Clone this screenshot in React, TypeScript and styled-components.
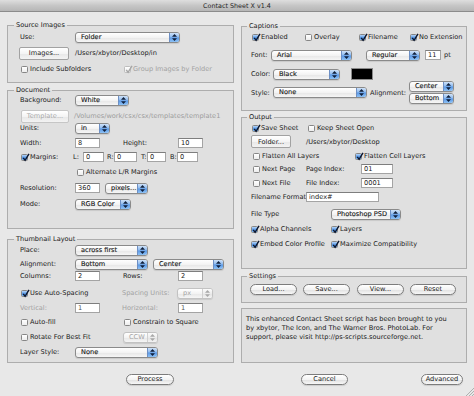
import React from 'react';
import styled, { createGlobalStyle } from 'styled-components';

const GlobalStyle = createGlobalStyle`
  html, body {
    margin: 0;
    padding: 0;
    background: #e8e8e8;
  }
  body {
    font-family: 'DejaVu Sans', 'Liberation Sans', sans-serif;
    font-size: 6.6px;
    color: #1a1a1a;
  }
  * {
    box-sizing: border-box;
  }
`;

const Window = styled.div`
  position: relative;
  width: 474px;
  height: 396px;
  display: flex;
  flex-direction: column;
  background: #e8e8e8;
  overflow: hidden;
`;

const TitleBar = styled.div`
  flex: none;
  height: 12px;
  display: flex;
  align-items: center;
  justify-content: center;
  background: linear-gradient(#dedede, #c6c6c6 50%, #b6b6b6);
  border-bottom: 1px solid #8c8c8c;
  color: #262626;
  font-size: 6.4px;
`;

const Body = styled.div`
  flex: none;
  display: grid;
  grid-template-columns: 227px 226px;
  column-gap: 7px;
  padding: 9px 0 0 7px;
`;

const Column = styled.div`
  display: flex;
  flex-direction: column;
`;

const Group = styled.fieldset<{ $mt?: number; $pb: number; $pl: number }>`
  margin: ${({ $mt }) => $mt ?? 0}px 0 0;
  padding: 0 0 ${({ $pb }) => $pb}px ${({ $pl }) => $pl}px;
  border: 1px solid #adadad;
  background: rgba(0, 0, 0, 0.03);
  min-width: 0;
`;

const Legend = styled.legend<{ $ml: number }>`
  margin-left: ${({ $ml }) => $ml}px;
  padding: 0 2px;
  line-height: 8px;
`;

const Row = styled.div<{ $mt?: number; $h?: number }>`
  display: flex;
  align-items: center;
  height: ${({ $h }) => $h ?? 12}px;
  margin-top: ${({ $mt }) => $mt ?? 0}px;
  white-space: nowrap;
`;

const Label = styled.span<{ $w?: number; $ml?: number; $off?: boolean }>`
  flex: none;
  width: ${({ $w }) => ($w ? `${$w}px` : 'auto')};
  margin-left: ${({ $ml }) => $ml ?? 0}px;
  color: ${({ $off }) => ($off ? '#a2a2a2' : '#1a1a1a')};
`;

const PathText = styled.span<{ $ml: number; $off?: boolean }>`
  margin-left: ${({ $ml }) => $ml}px;
  color: ${({ $off }) => ($off ? '#9c9c9c' : '#1a1a1a')};
`;

const PopupBox = styled.div<{ $w: number; $ml?: number; $off?: boolean }>`
  flex: none;
  width: ${({ $w }) => $w}px;
  height: 11px;
  margin-left: ${({ $ml }) => $ml ?? 0}px;
  display: flex;
  align-items: stretch;
  border: 1px solid ${({ $off }) => ($off ? '#c2c2c2' : '#8a8a8a')};
  border-radius: 3px;
  background: linear-gradient(#ffffff, #f3f3f3 50%, #e6e6e6 51%, #f6f6f6);
  box-shadow: 0 1px 1px rgba(0, 0, 0, 0.1);
  overflow: hidden;
`;

const PopupText = styled.span<{ $off?: boolean }>`
  flex: 1;
  padding-left: 5px;
  line-height: 9px;
  overflow: hidden;
  color: ${({ $off }) => ($off ? '#a4a4a4' : '#151515')};
  -webkit-text-stroke: ${({ $off }) => ($off ? '0' : '0.12px')};
`;

const PopupCap = styled.span<{ $off?: boolean }>`
  flex: none;
  width: 10px;
  display: flex;
  align-items: center;
  justify-content: center;
  border-left: 1px solid ${({ $off }) => ($off ? '#d0d0d0' : '#6d8fc4')};
  background: ${({ $off }) =>
    $off
      ? 'linear-gradient(#fbfbfb, #ececec 50%, #e2e2e2 51%, #f3f3f3)'
      : 'linear-gradient(#cfe2f9, #8ab8ee 48%, #5896e4 52%, #8fc3f6)'};
`;

const Field = styled.input<{ $w: number; $ml?: number; $dim?: boolean }>`
  flex: none;
  width: ${({ $w }) => $w}px;
  height: 10px;
  margin: 0 0 0 ${({ $ml }) => $ml ?? 0}px;
  padding: 0 2px;
  border: 1px solid #a4a4a4;
  border-top-color: #7e7e7e;
  background: #fff;
  font: inherit;
  color: ${({ $dim }) => ($dim ? '#555' : '#1a1a1a')};
  outline: none;
`;

const CheckItem = styled.span<{ $w?: number; $pl?: number; $off?: boolean }>`
  flex: none;
  display: flex;
  align-items: center;
  width: ${({ $w }) => ($w ? `${$w}px` : 'auto')};
  padding-left: ${({ $pl }) => $pl ?? 0}px;
  color: ${({ $off }) => ($off ? '#a2a2a2' : '#1a1a1a')};
`;

const Box = styled.span<{ $on?: boolean; $off?: boolean }>`
  position: relative;
  flex: none;
  width: 7px;
  height: 7px;
  margin-right: 2px;
  border: 1px solid ${({ $off }) => ($off ? '#bdbdbd' : '#868686')};
  border-radius: 1.5px;
  background: ${({ $on, $off }) =>
    $on && !$off
      ? 'linear-gradient(#b6d5f8, #5d9be6 50%, #3a80dc 51%, #86c0f6)'
      : 'linear-gradient(#ffffff, #ededed)'};
`;

const Tick = styled.svg`
  position: absolute;
  left: 0;
  top: -2px;
`;

const BevelButton = styled.button<{ $w: number; $ml?: number; $off?: boolean }>`
  flex: none;
  width: ${({ $w }) => $w}px;
  height: 13px;
  margin: 0 0 0 ${({ $ml }) => $ml ?? 0}px;
  padding: 0;
  font: inherit;
  color: ${({ $off }) => ($off ? '#a8a8a8' : '#1a1a1a')};
  border: 1px solid ${({ $off }) => ($off ? '#c6c6c6' : '#a2a2a2')};
  border-radius: 2px;
  background: linear-gradient(#ffffff, #f4f4f4 50%, #e7e7e7 51%, #f3f3f3);
`;

const PillButton = styled.button<{ $w: number; $ml?: number }>`
  flex: none;
  width: ${({ $w }) => $w}px;
  height: 11px;
  margin: 0 0 0 ${({ $ml }) => $ml ?? 0}px;
  padding: 0;
  font: inherit;
  line-height: 9px;
  color: #1a1a1a;
  border: 1px solid #7c7c7c;
  border-radius: 6px;
  background: linear-gradient(#ffffff, #f3f3f3 50%, #e0e0e0 51%, #f7f7f7);
  box-shadow: 0 1px 1px rgba(0, 0, 0, 0.12);
`;

const Swatch = styled.span<{ $ml: number }>`
  flex: none;
  width: 22px;
  height: 12px;
  margin-left: ${({ $ml }) => $ml}px;
  background: #000;
  border: 1px solid #8a8a8a;
`;

const Stack = styled.div<{ $ml: number }>`
  display: flex;
  flex-direction: column;
  gap: 1px;
  margin-left: ${({ $ml }) => $ml}px;
`;

const InfoBox = styled.div`
  flex: 1;
  margin-top: 5px;
  padding: 6px 4px 0;
  border: 1px solid #adadad;
  background: rgba(0, 0, 0, 0.03);
  line-height: 9px;
  white-space: nowrap;
`;

const Footer = styled.div`
  flex: 1;
  display: flex;
  align-items: center;
  padding-bottom: 1px;
`;

const Grip = styled.svg`
  position: absolute;
  right: 0;
  bottom: 0;
`;

type PopupProps = { text: string; w: number; ml?: number; off?: boolean };

function Popup({ text, w, ml, off }: PopupProps) {
  return (
    <PopupBox $w={w} $ml={ml} $off={off}>
      <PopupText $off={off}>{text}</PopupText>
      <PopupCap $off={off}>
        <svg width="5" height="7" viewBox="0 0 5 7">
          <path d="M2.5 0 L5 2.7 H0 Z M2.5 7 L5 4.3 H0 Z" fill={off ? '#a8a8a8' : '#10203c'} />
        </svg>
      </PopupCap>
    </PopupBox>
  );
}

type CheckProps = { label: string; on?: boolean; off?: boolean; w?: number; ml?: number };

function Check({ label, on, off, w, ml }: CheckProps) {
  return (
    <CheckItem $w={w} $pl={ml} $off={off}>
      <Box $on={on} $off={off}>
        {on && (
          <Tick width="8" height="9" viewBox="0 0 8 9">
            <path
              d="M1.2 4.9 L3.1 7.3 L7 0.8"
              fill="none"
              stroke={off ? '#a6a6a6' : '#0b1730'}
              strokeWidth="1.4"
            />
          </Tick>
        )}
      </Box>
      {label}
    </CheckItem>
  );
}

function LeftColumn() {
  return (
    <Column>
      <Group $pb={7} $pl={12}>
        <Legend $ml={-6}>Source Images</Legend>
        <Row $mt={2}>
          <Label $w={55}>Use:</Label>
          <Popup text="Folder" w={105} />
        </Row>
        <Row $mt={4}>
          <BevelButton $w={50} $ml={-1}>Images...</BevelButton>
          <PathText $ml={6}>/Users/xbytor/Desktop/in</PathText>
        </Row>
        <Row $mt={4}>
          <Check label="Include Subfolders" w={104} ml={1} />
          <Check label="Group Images by Folder" on off />
        </Row>
      </Group>

      <Group $mt={3} $pb={18} $pl={12}>
        <Legend $ml={-6}>Document</Legend>
        <Row>
          <Label $w={55}>Background:</Label>
          <Popup text="White" w={54} />
        </Row>
        <Row $mt={4}>
          <BevelButton $w={48} $ml={1} $off>Template...</BevelButton>
          <PathText $ml={5} $off>/Volumes/work/csx/csx/templates/template1</PathText>
        </Row>
        <Row>
          <Label $w={55}>Units:</Label>
          <Popup text="in" w={35} />
        </Row>
        <Row $mt={3}>
          <Label $w={55}>Width:</Label>
          <Field $w={25} defaultValue="8" readOnly />
          <Label $w={55} $ml={23}>Height:</Label>
          <Field $w={25} defaultValue="10" readOnly />
        </Row>
        <Row $mt={2}>
          <Check label="Margins:" on w={53} ml={1} />
          <Label $w={10}>L:</Label>
          <Field $w={21} defaultValue="0" readOnly />
          <Label $w={7} $ml={3}>R:</Label>
          <Field $w={23} defaultValue="0" readOnly />
          <Label $w={6} $ml={4}>T:</Label>
          <Field $w={19} defaultValue="0" readOnly />
          <Label $w={7} $ml={4}>B:</Label>
          <Field $w={21} defaultValue="0" readOnly />
        </Row>
        <Row $mt={3}>
          <Check label="Alternate L/R Margins" ml={57} />
        </Row>
        <Row $mt={4}>
          <Label $w={55}>Resolution:</Label>
          <Field $w={25} defaultValue="360" readOnly />
          <Popup text="pixels..." w={43} ml={5} />
        </Row>
        <Row $mt={4}>
          <Label $w={55}>Mode:</Label>
          <Popup text="RGB Color" w={56} />
        </Row>
      </Group>

      <Group $mt={6} $pb={4} $pl={12}>
        <Legend $ml={-6}>Thumbnail Layout</Legend>
        <Row $mt={1}>
          <Label $w={55}>Place:</Label>
          <Popup text="across first" w={73} />
        </Row>
        <Row $mt={2}>
          <Label $w={55}>Alignment:</Label>
          <Popup text="Bottom" w={73} />
          <Popup text="Center" w={71} ml={5} />
        </Row>
        <Row>
          <Label $w={55}>Columns:</Label>
          <Field $w={25} defaultValue="2" readOnly />
          <Label $w={55} $ml={23}>Rows:</Label>
          <Field $w={25} defaultValue="2" readOnly />
        </Row>
        <Row $mt={5}>
          <Check label="Use Auto-Spacing" on w={102} ml={1} />
          <Label $w={55} $off>Spacing Units:</Label>
          <Popup text="px" w={36} off />
        </Row>
        <Row $mt={3}>
          <Label $w={55} $off>Vertical:</Label>
          <Field $w={25} defaultValue="1" readOnly $dim />
          <Label $w={56} $ml={22} $off>Horizontal:</Label>
          <Field $w={25} defaultValue="1" readOnly $dim />
        </Row>
        <Row $mt={2}>
          <Check label="Auto-fill" w={104} ml={1} />
          <Check label="Constrain to Square" />
        </Row>
        <Row $mt={3}>
          <Check label="Rotate For Best Fit" w={103} ml={1} />
          <Popup text="CCW" w={35} off />
        </Row>
        <Row $mt={3}>
          <Label $w={55}>Layer Style:</Label>
          <Popup text="None" w={83} />
        </Row>
      </Group>
    </Column>
  );
}

function RightColumn() {
  return (
    <Column>
      <Group $mt={1} $pb={6} $pl={9}>
        <Legend $ml={-4}>Captions</Legend>
        <Row $mt={1}>
          <Check label="Enabled" on w={54} ml={1} />
          <Check label="Overlay" w={54} />
          <Check label="Filename" on w={51} />
          <Check label="No Extension" on />
        </Row>
        <Row $mt={6}>
          <Label $w={20}>Font:</Label>
          <Popup text="Arial" w={81} />
          <Popup text="Regular" w={54} ml={14} />
          <Field $w={16} $ml={5} defaultValue="11" readOnly />
          <Label $ml={3}>pt</Label>
        </Row>
        <Row $mt={7}>
          <Label $w={22}>Color:</Label>
          <Popup text="Black" w={67} />
          <Swatch $ml={11} />
        </Row>
        <Row $mt={1} $h={23}>
          <Label $w={22}>Style:</Label>
          <Popup text="None" w={94} />
          <Label $w={39} $ml={3}>Alignment:</Label>
          <Stack $ml={0}>
            <Popup text="Center" w={45} />
            <Popup text="Bottom" w={45} />
          </Stack>
        </Row>
      </Group>

      <Group $mt={2} $pb={18} $pl={9}>
        <Legend $ml={-4}>Output</Legend>
        <Row $mt={1}>
          <Check label="Save Sheet" on w={57} ml={1} />
          <Check label="Keep Sheet Open" />
        </Row>
        <Row $mt={1} $h={13}>
          <BevelButton $w={40}>Folder...</BevelButton>
          <PathText $ml={15}>/Users/xbytor/Desktop</PathText>
        </Row>
        <Row $mt={2}>
          <Check label="Flatten All Layers" w={104} ml={2} />
          <Check label="Flatten Cell Layers" on />
        </Row>
        <Row $mt={1}>
          <Check label="Next Page" w={55} ml={2} />
          <Label $w={55}>Page Index:</Label>
          <Field $w={32} defaultValue="01" readOnly />
        </Row>
        <Row $mt={2}>
          <Check label="Next File" w={55} ml={2} />
          <Label $w={55}>File Index:</Label>
          <Field $w={32} defaultValue="0001" readOnly />
        </Row>
        <Row $mt={2}>
          <Label $w={55}>Filename Format</Label>
          <Field $w={73} defaultValue="index#" readOnly />
        </Row>
        <Row $mt={5}>
          <Label $w={80}>File Type</Label>
          <Popup text="Photoshop PSD" w={70} />
        </Row>
        <Row $mt={3}>
          <Check label="Alpha Channels" on w={80} />
          <Check label="Layers" on />
        </Row>
        <Row $mt={3}>
          <Check label="Embed Color Profile" on w={80} />
          <Check label="Maximize Compatibility" on />
        </Row>
      </Group>

      <Group $mt={3} $pb={7} $pl={9}>
        <Legend $ml={-4}>Settings</Legend>
        <Row $mt={3}>
          <PillButton $w={47} $ml={-1}>Load...</PillButton>
          <PillButton $w={47} $ml={6}>Save...</PillButton>
          <PillButton $w={47} $ml={7}>View...</PillButton>
          <PillButton $w={46} $ml={6}>Reset</PillButton>
        </Row>
      </Group>

      <InfoBox>
        This enhanced Contact Sheet script has been brought to you
        <br />
        by xbytor, The Icon, and The Warner Bros. PhotoLab. For
        <br />
        support, please visit http://ps-scripts.sourceforge.net.
      </InfoBox>
    </Column>
  );
}

export default function App() {
  return (
    <>
      <GlobalStyle />
      <Window>
        <TitleBar>Contact Sheet X v1.4</TitleBar>
        <Body>
          <LeftColumn />
          <RightColumn />
        </Body>
        <Footer>
          <PillButton $w={48} $ml={126}>Process</PillButton>
          <PillButton $w={47} $ml={127}>Cancel</PillButton>
          <PillButton $w={42} $ml={73}>Advanced</PillButton>
        </Footer>
        <Grip width="10" height="10" viewBox="0 0 10 10">
          <path d="M10 2 L2 10 M10 5 L5 10 M10 8 L8 10" stroke="#a0a0a0" strokeWidth="0.8" />
        </Grip>
      </Window>
    </>
  );
}
